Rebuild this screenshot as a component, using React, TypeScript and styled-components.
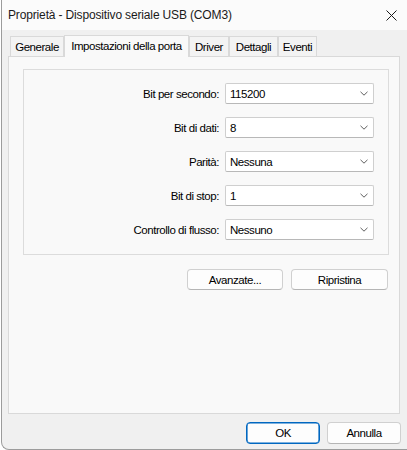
import React from "react";
import styled, { createGlobalStyle } from "styled-components";

const Global = createGlobalStyle`
  html, body { margin: 0; padding: 0; background: #ffffff; }
  body { font-family: "Liberation Sans", Arial, sans-serif; color: #000; }
  * { box-sizing: border-box; }
`;

const Window = styled.div`
  margin-left: 1px;
  width: 406px;
  height: 450px;
  border-left: 1px solid #9c9c9c;
  border-bottom: 1px solid #9c9c9c;
  border-bottom-left-radius: 8px;
  background: #f0f0f0;
  display: flex;
  flex-direction: column;
  overflow: hidden;
`;

const TitleBar = styled.div`
  height: 30px;
  flex: none;
  background: #fbfbfb;
  display: flex;
  align-items: center;
  justify-content: space-between;
  padding-left: 6px;
`;

const TitleText = styled.span`
  font-size: 12px;
  letter-spacing: -0.15px;
  color: #1a1a1a;
`;

const CloseBtn = styled.div`
  width: 32px;
  height: 30px;
  display: flex;
  align-items: center;
  justify-content: center;
`;

const Body = styled.div`
  flex: 1;
  display: flex;
  flex-direction: column;
  padding: 5px 7px 0 6px;
`;

const TabStrip = styled.div`
  display: flex;
  align-items: flex-end;
  padding-left: 2px;
  flex: none;
`;

const Tab = styled.div<{ $active?: boolean; $w: number }>`
  position: relative;
  z-index: ${(p) => (p.$active ? 1 : 0)};
  width: ${(p) => p.$w}px;
  height: ${(p) => (p.$active ? 22 : 20)}px;
  margin-bottom: ${(p) => (p.$active ? -1 : 0)}px;
  padding-bottom: ${(p) => (p.$active ? 2 : 0)}px;
  background: ${(p) => (p.$active ? "#f9f9f9" : "#f3f3f3")};
  border: 1px solid #d9d9d9;
  border-bottom: none;
  display: flex;
  align-items: center;
  justify-content: center;
  font-size: 11.5px;
  letter-spacing: -0.45px;
  white-space: nowrap;
`;

const Panel = styled.div`
  flex: 1;
  background: #f9f9f9;
  border: 1px solid #d9d9d9;
  padding: 12px 10px 0 14px;
  display: flex;
  flex-direction: column;
`;

const GroupBox = styled.div`
  border: 1px solid #dcdcdc;
  padding: 13px 14px 14px 14px;
  display: grid;
  grid-template-columns: 1fr 149px;
  column-gap: 6px;
  row-gap: 13px;
  align-items: center;
`;

const Label = styled.label`
  text-align: right;
  font-size: 11.5px;
  letter-spacing: -0.45px;
  white-space: nowrap;
`;

const Combo = styled.div`
  height: 21px;
  background: #ffffff;
  border: 1px solid #cfcfcf;
  border-bottom-color: #b8b8b8;
  border-radius: 2px;
  display: flex;
  align-items: center;
  justify-content: space-between;
  padding: 0 5px 0 4px;
  font-size: 11.5px;
  letter-spacing: -0.45px;
`;

const ButtonRow = styled.div`
  display: flex;
  justify-content: flex-end;
  gap: 8px;
  margin-top: 14px;
  padding-right: 1px;
`;

const Button = styled.button<{ $primary?: boolean; $w: number; $h: number }>`
  width: ${(p) => p.$w}px;
  height: ${(p) => p.$h}px;
  font-family: "Liberation Sans", Arial, sans-serif;
  font-size: 11.5px;
  letter-spacing: -0.45px;
  color: #000;
  background: #fdfdfd;
  border: 1px solid ${(p) => (p.$primary ? "#0067c0" : "#d0d0d0")};
  border-bottom-color: ${(p) => (p.$primary ? "#0067c0" : "#b5b5b5")};
  box-shadow: ${(p) => (p.$primary ? "inset 0 0 0 0.6px #0067c0" : "none")};
  border-radius: 4px;
  padding: 0;
  display: flex;
  align-items: center;
  justify-content: center;
`;

const Footer = styled.div`
  height: 35px;
  flex: none;
  display: flex;
  justify-content: flex-end;
  align-items: flex-start;
  gap: 7px;
  padding: 8px 6px 0 0;
`;

const Chevron = () => (
  <svg width="8" height="5" viewBox="0 0 8 5">
    <path d="M0.5 0.8 L4 4.2 L7.5 0.8" fill="none" stroke="#5f5f5f" strokeWidth="1" />
  </svg>
);

const CloseIcon = () => (
  <svg width="11" height="11" viewBox="0 0 11 11">
    <path d="M0.5 0.5 L10.5 10.5 M10.5 0.5 L0.5 10.5" stroke="#1a1a1a" strokeWidth="1" />
  </svg>
);

const fields: [string, string][] = [
  ["Bit per secondo:", "115200"],
  ["Bit di dati:", "8"],
  ["Parità:", "Nessuna"],
  ["Bit di stop:", "1"],
  ["Controllo di flusso:", "Nessuno"],
];

const tabs: [string, number][] = [
  ["Generale", 54],
  ["Impostazioni della porta", 125],
  ["Driver", 40],
  ["Dettagli", 49],
  ["Eventi", 39],
];

export default function App() {
  return (
    <>
      <Global />
      <Window>
        <TitleBar>
          <TitleText>Proprietà - Dispositivo seriale USB (COM3)</TitleText>
          <CloseBtn>
            <CloseIcon />
          </CloseBtn>
        </TitleBar>
        <Body>
          <TabStrip>
            {tabs.map(([t, w], i) => (
              <Tab key={t} $w={w} $active={i === 1}>
                {t}
              </Tab>
            ))}
          </TabStrip>
          <Panel>
            <GroupBox>
              {fields.map(([l, v]) => (
                <React.Fragment key={l}>
                  <Label>{l}</Label>
                  <Combo>
                    <span>{v}</span>
                    <Chevron />
                  </Combo>
                </React.Fragment>
              ))}
            </GroupBox>
            <ButtonRow>
              <Button $w={96} $h={21}>Avanzate...</Button>
              <Button $w={97} $h={21}>Ripristina</Button>
            </ButtonRow>
          </Panel>
        </Body>
        <Footer>
          <Button $primary $w={74} $h={22}>OK</Button>
          <Button $w={74} $h={22}>Annulla</Button>
        </Footer>
      </Window>
    </>
  );
}
